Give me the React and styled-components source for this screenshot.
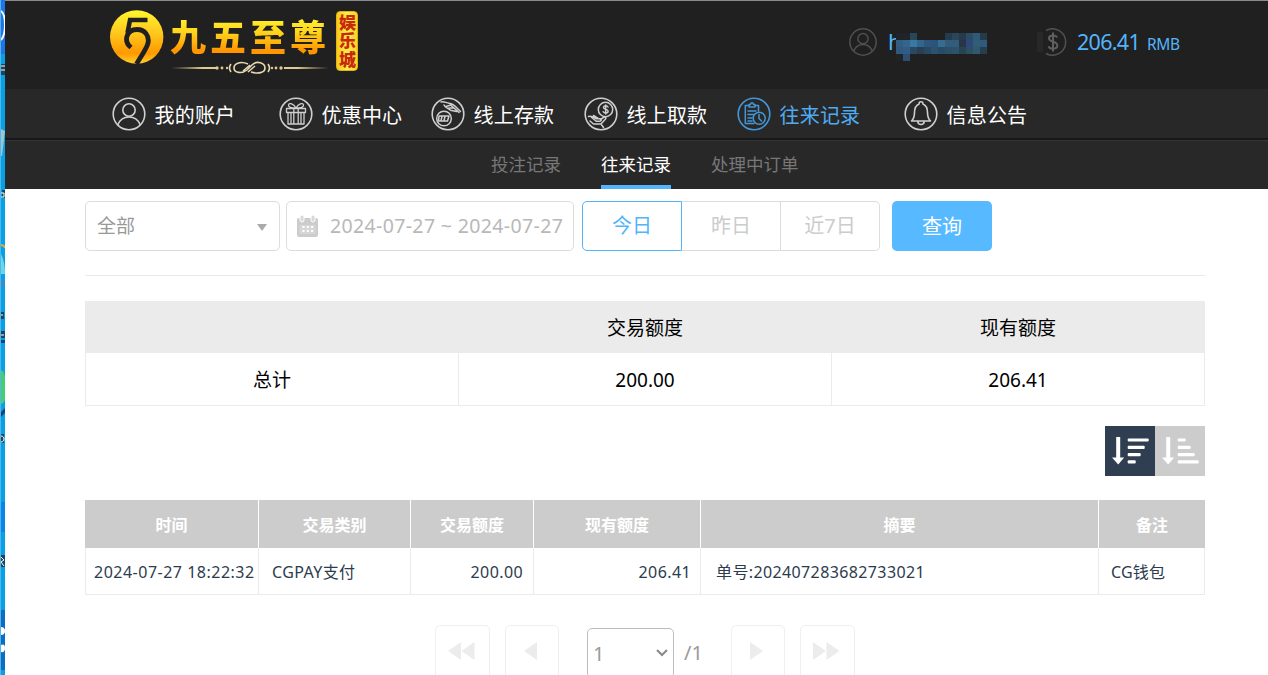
import React from "react";
import styled, { createGlobalStyle } from "styled-components";

const GlobalStyle = createGlobalStyle`
  * { box-sizing: border-box; }
  html, body { margin: 0; padding: 0; background: #fff; overflow: hidden; }
  body { font-family: "Noto Sans", "Noto Sans CJK SC", sans-serif; }
`;

const Screen = styled.div`
  display: flex;
  width: 100%;
  height: 100vh;
  overflow: hidden;
`;

const Desktop = styled.div`
  flex: 0 0 5px;
  overflow: hidden;
  border-left: 1px solid #55b4e8;
  svg { display: block; }
`;

const Page = styled.div`
  flex: 1;
  min-width: 0;
  background: #fff;
`;

const Header = styled.header`
  height: 89px;
  display: flex;
  padding-left: 104px;
  background: #202020;
  border-top: 1px solid #8a8c8b;
`;

const Logo = styled.div`
  display: flex;
  align-items: flex-start;
  width: 740px;
`;

const Emblem = styled.svg`
  margin-top: 8px;
  flex: none;
`;

const Brand = styled.div`
  margin-left: 5px;
  width: 160px;
  padding-top: 12px;
  display: flex;
  flex-direction: column;
  svg { margin: 3px 0 0 1px; }
`;

const BrandName = styled.div`
  height: 44px;
  line-height: 44px;
  font-size: 36px;
  font-weight: 900;
  font-family: "Noto Sans CJK SC", sans-serif;
  letter-spacing: 4px;
  white-space: nowrap;
  color: transparent;
  background: linear-gradient(#fff12a 14%, #ffd21c 45%, #ff9600 85%);
  background-clip: text;
  -webkit-background-clip: text;
`;

const BrandTag = styled.div`
  width: 22px;
  height: 60px;
  margin: 10px 0 0 6px;
  padding-top: 2px;
  border-radius: 4px;
  border: 1px solid #e0b512;
  background: linear-gradient(90deg, #f9c81c, #fff04a 50%, #fbd428);
  color: #c8280c;
  font-family: "Noto Sans CJK SC", sans-serif;
  font-size: 17px;
  font-weight: 900;
  line-height: 20px;
  letter-spacing: 1.5px;
  writing-mode: vertical-rl;
  white-space: nowrap;
`;

const Account = styled.div`
  display: flex;
  align-items: center;
  height: 82px;
  color: #53b4fc;
`;

const UserName = styled.div`
  display: flex;
  align-items: center;
  width: 149px;
  margin-left: 11px;
  font-size: 22px;
  span { margin-top: -2px; }
`;

const Mosaic = styled.div`
  display: grid;
  grid-template-columns: repeat(13, 7px);
  grid-auto-rows: 7px;
  margin: 9px 0 0 -6px;
`;

const Cell = styled.i`
  background: ${(p) => p.$tone};
`;

const CoinShade = styled.div`
  width: 6px;
  height: 20px;
  background: #282828;
`;

const Balance = styled.div`
  margin: -1px 0 0 10px;
  font-size: 21.5px;
  letter-spacing: -0.7px;
  white-space: nowrap;
  small { font-size: 15.5px; letter-spacing: -0.4px; margin-left: 7px; }
`;

const Nav = styled.nav`
  height: 52px;
  display: flex;
  align-items: flex-start;
  padding: 8px 0 0 107px;
  background: #282828;
  border-bottom: 1px solid #353535;
  box-shadow: inset 0 -2px 0 #171717;
`;

const NavItem = styled.a`
  display: flex;
  align-items: center;
  flex: none;
  width: ${(p) => p.$width}px;
  height: 34px;
  font-size: 20px;
  letter-spacing: 0.2px;
  white-space: nowrap;
  color: ${(p) => (p.$active ? "#4fabf2" : "#fff")};
  svg { flex: none; margin-right: 8.5px; color: ${(p) => (p.$active ? "#4596d6" : "#cfcfcf")}; }
`;

const SubNav = styled.div`
  display: flex;
  gap: 40px;
  height: 48px;
  padding-left: 486px;
  background: #282828;
`;

const SubItem = styled.a`
  height: 48px;
  line-height: 46px;
  font-size: 17.5px;
  color: ${(p) => (p.$active ? "#fff" : "#777")};
  border-bottom: ${(p) => (p.$active ? "4px solid #53b4fc" : "0")};
`;

const Content = styled.main`
  width: 1120px;
  margin-left: 80px;
  padding-top: 12px;
`;

const Filters = styled.div`
  display: flex;
  height: 75px;
  border-bottom: 1px solid #e9e9e9;
  font-size: 20px;
  line-height: 48px;
`;

const Field = styled.div`
  display: flex;
  align-items: center;
  width: ${(p) => p.$width}px;
  height: 50px;
  margin-right: ${(p) => p.$after}px;
  padding: 0 ${(p) => p.$right}px 0 ${(p) => p.$left}px;
  border: 1px solid #dcdcdc;
  border-radius: 5px;
  color: ${(p) => p.$color};
  white-space: nowrap;
  svg { flex: none; }
`;

const Kind = styled.span`
  flex: 1;
  font-size: 19px;
`;

const Caret = styled.i`
  margin-top: 3px;
  border: 5px solid transparent;
  border-top: 7px solid #aaa;
  border-bottom: 0;
`;

const DateText = styled.span`
  margin-left: 12px;
  font-size: 19.5px;
  letter-spacing: 0.36px;
`;

const Period = styled.button`
  width: ${(p) => (p.$active ? 100 : 99)}px;
  height: 50px;
  padding: 0;
  font: inherit;
  line-height: 48px;
  background: #fff;
  color: ${(p) => (p.$active ? "#53b4fc" : "#ccc")};
  border: 1px solid ${(p) => (p.$active ? "#53b4fc" : "#dcdcdc")};
  border-left-width: ${(p) => (p.$active ? 1 : 0)}px;
  border-radius: ${(p) => p.$radius || "0"};
`;

const Search = styled.button`
  width: 100px;
  height: 50px;
  margin-left: 12px;
  padding: 2px 0 0 0;
  border: 0;
  border-radius: 5px;
  background: #57b9ff;
  color: #fff;
  font: inherit;
`;

const Summary = styled.div`
  display: grid;
  grid-template-columns: 372px 373px 373px;
  margin-top: 25px;
  font-size: 19px;
  text-align: center;
  color: #000;
  border: 1px solid #ebebeb;
  border-top: 0;
`;

const SummaryHead = styled.div`
  height: 52px;
  padding-left: 1px;
  line-height: 54px;
  background: #ebebeb;
`;

const SummaryCell = styled.div`
  height: 52px;
  line-height: 54px;
  border-left: ${(p) => (p.$first ? "0" : "1px solid #ebebeb")};
`;

const SortBar = styled.div`
  display: flex;
  justify-content: flex-end;
  height: 50px;
  margin: 20px 0 24px;
`;

const SortButton = styled.div`
  width: 50px;
  height: 50px;
  background: ${(p) => (p.$active ? "#303e51" : "#ccc")};
  svg { display: block; }
`;

const Records = styled.div`
  display: grid;
  grid-template-columns: 174px 152px 123px 167px 398px 106px;
  font-size: 16px;
`;

const RecordHead = styled.div`
  height: 48px;
  line-height: 50px;
  background: #ccc;
  color: #fff;
  font-weight: 700;
  text-align: center;
  border-right: ${(p) => (p.$last ? "0" : "1px solid #fff")};
`;

const RecordCell = styled.div`
  height: 47px;
  line-height: 49px;
  padding: 0 ${(p) => p.$right || 0}px 0 ${(p) => p.$left || 0}px;
  text-align: ${(p) => (p.$right ? "right" : "left")};
  letter-spacing: ${(p) => p.$track || 0}px;
  color: #2d3b4e;
  white-space: nowrap;
  border-right: 1px solid #ebebeb;
  border-bottom: 1px solid #ebebeb;
  border-left: ${(p) => (p.$first ? "1px solid #ebebeb" : "0")};
`;

const Pager = styled.div`
  display: flex;
  align-items: flex-start;
  padding: 30px 0 0 350px;
  color: #999;
  font-size: 20px;
`;

const PageButton = styled.div`
  display: flex;
  justify-content: center;
  width: ${(p) => p.$width}px;
  height: 56px;
  padding: 16px 2px 0 0;
  margin-right: 15px;
  border: 1px solid #efefef;
  border-radius: 5px;
`;

const PageSelect = styled.div`
  display: flex;
  align-items: center;
  justify-content: space-between;
  width: 87px;
  height: 50px;
  margin: 3px 10px 0 13px;
  padding: 0 6px 0 5px;
  border: 1px solid #bdbdbd;
  border-radius: 5px;
  svg { margin-right: -1px; }
`;

const PageTotal = styled.div`
  width: 47px;
  margin-top: 3px;
  line-height: 50px;
`;

const mosaicTones = [
  "#202327", "#202327", "#28475b", "#202020", "#202020", "#202020", "#202020", "#253b4e", "#2a465a", "#273a4d", "#2b4c62", "#2f5a7a", "#263b48",
  "#335d83", "#33658d", "#3779a2", "#32668c", "#2d557d", "#2c537c", "#356d91", "#315c7c", "#315c7c", "#283449", "#304879", "#315e74", "#305880",
  "#31587d", "#305d86", "#2b4863", "#293e52", "#294960", "#2b536f", "#294b68", "#2c4f67", "#2d5269", "#284352", "#2c5061", "#2f5971", "#293e4c",
  "#202327", "#2c4f72", "#202020", "#202020", "#202020", "#202020", "#202020", "#202020", "#202020", "#202020", "#202020", "#202020", "#202020",
];

const Icon = ({ size = 34, children }) => (
  <svg width={size} height={size} viewBox="0 0 34 34" fill="none" stroke="currentColor" strokeWidth="1.6" strokeLinecap="round" strokeLinejoin="round">
    <circle cx="17" cy="17" r="15.8" />
    {children}
  </svg>
);

const person = (
  <>
    <circle cx="17" cy="13" r="6.2" />
    <path d="M6 27.5C8 22.5 12 20 17 20s9 2.500 11 7.500" />
  </>
);

const hand = (
  <path d="M4.500 19.500c3-.8 5 .3 7.500 2.200h4c1.700.2 1.700 2.200 0 2.500h-4M16.500 22.500l3.500-2.300c1.500-.6 2.500.8 1.500 1.900L17 27H9.500L6 24M9.500 18.500l5 3.200M7 20l5 4M17 27l2.500 3.500" />
);

const navItems = [
  { label: "我的账户", width: 167, art: person },
  {
    label: "优惠中心",
    width: 152,
    art: (
      <g strokeWidth="1.300">
        <path d="M7.500 11.500h19v4h-19zM9 15.500h16v11.500H9zM14.800 11.500V27M19.200 11.500V27M12 15.500V27M22 15.500V27M17 11c-2-4-7-6-7.500-2.800C9.300 10 12 11 17 11c5 0 7.700-1 7.500-2.800C24 5 19 7 17 11z" />
      </g>
    ),
  },
  {
    label: "线上存款",
    width: 153,
    art: (
      <g strokeWidth="1.500">
        <circle cx="13" cy="21.500" r="7.300" />
        <path d="M8 19h10l-1.500 5H7.500zM11 19.500l-1 4M14 19.500l-1 4M10 5c3-1.200 5 1 8 1.200 4 .3 6 2.500 8.500 5.300l3 3M13 8c1.500 3 4 3 6.500 5.200l6 1.300M18 11h5l5 4.500M20 8.500l6 5M15 9.500l5-1.500" />
      </g>
    ),
  },
  {
    label: "线上取款",
    width: 153,
    art: (
      <g strokeWidth="1.500">
        <circle cx="21.500" cy="12.500" r="7.200" />
        <path d="M24 10c-1-1.800-4.500-1.500-4.500.4 0 2.400 4.600 1.400 4.600 3.900 0 2-3.900 2.300-4.900.4M21.700 8v9" />
        {hand}
      </g>
    ),
  },
  {
    label: "往来记录",
    width: 167,
    active: true,
    art: (
      <g strokeWidth="1.500">
        <path d="M17 26.500H8.300V8.500H12M18 8.500h3.500V14M12 10h6V7.500h-1.500c0-2.500-3-2.500-3 0H12zM11 14h8M11 17.500h6M11 21h4M11 24h4" />
        <circle cx="22.200" cy="21.200" r="6" />
        <path d="M22 17.500v4l2.500 2.500" />
      </g>
    ),
  },
  {
    label: "信息公告",
    width: 123,
    art: (
      <path d="M7.500 24h19c-2-2-3-4-3-8.500 0-4.500-1.800-7.300-4.500-8.500 0-3-4-3-4 0-2.700 1.200-4.500 4-4.500 8.500 0 4.500-1 6.500-3 8.500zM13.800 24.500c.3 4 6.100 4 6.400 0" />
    ),
  },
];

const SortIcon = ({ widths }) => (
  <svg width="50" height="50" viewBox="0 0 50 50" fill="#fff">
    <path d="M11.200 11h4v20.500h4L13.200 38.500 7 31.500h4.200z" />
    {widths.map((w, i) => (
      <rect key={i} x="22.700" y={12.400 + i * 7.300} width={w} height="3.200" rx="1" />
    ))}
  </svg>
);

const Arrows = ({ count, forward }) => (
  <svg width={count * 13.500} height="18" viewBox={`0 0 ${count * 13.500} 18`} fill="#ececec">
    {Array.from({ length: count }, (_, i) => (
      <path key={i} transform={`translate(${i * 13.500} 0)`} d={forward ? "M0 0v18l13-9z" : "M13 0v18L0 9z"} />
    ))}
  </svg>
);

const DesktopEdge = () => (
  <svg width="4" height="675" viewBox="0 0 4 675">
    <rect width="4" height="675" fill="#05a0e5" />
    <rect width="4" height="54" fill="#1d76e9" />
    <path d="M0 11c3 2 4 8 4 14s-1 12-4 15" fill="none" stroke="#fff" strokeWidth="2" />
    <path d="M0 64h4v11H0zM1 190h3v8H1zM0 312h3v7H0zM0 331h4v7H0zM0 434h3v9H0zM0 555h4v12H0z" fill="#174761" />
    <path d="M0 66h4M0 70h4M0 193h3v4H0M0 315h2M0 335h3M0 436c4 0 4 6 0 6M0 557l3 3-3 2 3 4" fill="none" stroke="#fff" />
    <path d="M0 129l4 2-3 25H0z" fill="#9ac5d5" />
    <path d="M0 245q3 0 4 3" fill="none" stroke="#e3aa35" strokeWidth="2" />
    <path d="M0 254q4 8 4 20H0z" fill="#69d7eb" />
    <path d="M0 280h4q-1 8-4 9z" fill="#398ecf" />
    <path d="M0 340h4v3H0zM0 412l4-4v5l-4 4z" fill="#164480" />
    <path d="M0 370q4 2 4 9v21q-1 3-4 4z" fill="#45cf70" />
    <rect y="502" width="4" height="30" fill="#0785ee" />
    <rect y="610" width="4" height="60" fill="#0c6dc5" />
    <path d="M0 627q4 0 4 4t-4 4zM0 645q4-2 4 3t-4 4z" fill="#fff" />
  </svg>
);

export default function App() {
  return (
    <Screen>
      <GlobalStyle />
      <Desktop><DesktopEdge /></Desktop>
      <Page>
        <Header>
          <Logo>
            <Emblem width="56" height="56" viewBox="0 0 56 56">
              <defs>
                <linearGradient id="gold" x1="0" y1="0" x2="0" y2="1">
                  <stop offset="0" stopColor="#fff62d" />
                  <stop offset=".45" stopColor="#ffc51c" />
                  <stop offset=".8" stopColor="#ff9800" />
                  <stop offset="1" stopColor="#ffd02c" />
                </linearGradient>
              </defs>
              <circle cx="27.700" cy="28" r="26.700" fill="url(#gold)" />
              <path d="M38.500 11H21l-2.500 13" fill="none" stroke="#202020" strokeWidth="4.500" />
              <path d="M22 38.500C14 32 17.500 20.500 28 20.500c8 0 12.500 6.500 11 13.500-1.300 6-7 13-11.500 21" fill="none" stroke="#202020" strokeWidth="4.800" />
            </Emblem>
            <Brand>
              <BrandName>九五至尊</BrandName>
              <svg width="158" height="14" viewBox="0 0 158 14">
                <defs>
                  <linearGradient id="rule" gradientUnits="userSpaceOnUse" x1="0" y1="0" x2="158" y2="0">
                    <stop offset="0" stopColor="#c9ad6d" stopOpacity="0" />
                    <stop offset=".2" stopColor="#dfcb94" />
                    <stop offset=".8" stopColor="#dfcb94" />
                    <stop offset="1" stopColor="#c9ad6d" stopOpacity="0" />
                  </linearGradient>
                </defs>
                <path d="M0 7h45v2H0zM113 7h45v2h-45z" fill="url(#rule)" />
                <g fill="#dfcb94">
                  <circle cx="46" cy="8" r="1.700" /><circle cx="51" cy="8" r="1.400" /><circle cx="56" cy="8" r="1.200" />
                  <circle cx="101" cy="8" r="1.200" /><circle cx="105" cy="8" r="1.400" /><circle cx="110" cy="8" r="1.700" />
                </g>
                <path d="M60 4q-3 4 0 8M97 4q3 4 0 8M77 4C70 1 63 3 63 8s8 6 13 2l5-5c5-5 13-2 13 3s-7 6-14 4M72 11l7-6M77 12l7-6" fill="none" stroke="#e5d9b0" strokeWidth="1.600" />
              </svg>
            </Brand>
            <BrandTag>娱乐城</BrandTag>
          </Logo>
          <Account>
            <svg width="28" height="28" viewBox="0 0 34 34" fill="none" stroke="#505050" strokeWidth="1.800">
              <circle cx="17" cy="17" r="16" />{person}
            </svg>
            <UserName>
              <span>h</span>
              <Mosaic>{mosaicTones.map((tone, i) => <Cell key={i} $tone={tone} />)}</Mosaic>
            </UserName>
            <CoinShade />
            <svg width="24" height="28" viewBox="0 0 24 28" fill="none" stroke="#606060" strokeWidth="1.500">
              <path d="M3 2.500a13.200 13.200 0 1 1 0 23" stroke="#505050" />
              <path d="M14 9.500c-1.200-3-8-2.700-8 .8 0 4.500 8.300 2.500 8.300 7.200 0 4-7.500 4.200-8.700.8M10 4.500v19" strokeWidth="2" />
            </svg>
            <Balance>206.41<small>RMB</small></Balance>
          </Account>
        </Header>
        <Nav>
          {navItems.map((n) => (
            <NavItem key={n.label} $width={n.width} $active={n.active}>
              <Icon>{n.art}</Icon>{n.label}
            </NavItem>
          ))}
        </Nav>
        <SubNav>
          <SubItem>投注记录</SubItem>
          <SubItem $active>往来记录</SubItem>
          <SubItem>处理中订单</SubItem>
        </SubNav>
        <Content>
          <Filters>
            <Field $width={195} $after={6} $left={11} $right={12} $color="#999"><Kind>全部</Kind><Caret /></Field>
            <Field $width={288} $after={8} $left={10} $right={0} $color="#b8b8b8">
              <svg width="21" height="22" viewBox="0 0 21 22">
                <path d="M0 5q0-2 2-2h17q2 0 2 2v15q0 2-2 2H2q-2 0-2-2z" fill="#ccc" />
                <path d="M2.500 10h16v9h-16z" fill="#fff" opacity=".2" />
                <g fill="#d8d8d8" stroke="#fff"><rect x="3" y="0" width="4" height="7" rx="2" /><rect x="14" y="0" width="4" height="7" rx="2" /></g>
                <path d="M5.500 12h11M5.500 16h11" stroke="#fff" strokeWidth="2" strokeDasharray="2 2.300" />
              </svg>
              <DateText>2024-07-27 ~ 2024-07-27</DateText>
            </Field>
            <Period $active $radius="5px 0 0 5px">今日</Period>
            <Period>昨日</Period>
            <Period $radius="0 5px 5px 0">近7日</Period>
            <Search>查询</Search>
          </Filters>
          <Summary>
            <SummaryHead /><SummaryHead>交易额度</SummaryHead><SummaryHead>现有额度</SummaryHead>
            <SummaryCell $first>总计</SummaryCell><SummaryCell>200.00</SummaryCell><SummaryCell>206.41</SummaryCell>
          </Summary>
          <SortBar>
            <SortButton $active><SortIcon widths={[21, 17, 13, 8]} /></SortButton>
            <SortButton><SortIcon widths={[8, 13, 17, 21]} /></SortButton>
          </SortBar>
          <Records>
            {["时间", "交易类别", "交易额度", "现有额度", "摘要", "备注"].map((h, i) => (
              <RecordHead key={i} $last={i === 5}>{h}</RecordHead>
            ))}
            <RecordCell $first $left={8} $track={0.5}>2024-07-27 18:22:32</RecordCell>
            <RecordCell $left={13} $track={0.4}>CGPAY支付</RecordCell>
            <RecordCell $right={10} $track={0.4}>200.00</RecordCell>
            <RecordCell $right={9} $track={0.4}>206.41</RecordCell>
            <RecordCell $left={15} $track={0.38}>单号:202407283682733021</RecordCell>
            <RecordCell $left={12} $track={0.2}>CG钱包</RecordCell>
          </Records>
          <Pager>
            <PageButton $width={55}><Arrows count={2} /></PageButton>
            <PageButton $width={54}><Arrows count={1} /></PageButton>
            <PageSelect>
              1
              <svg width="12" height="8" viewBox="0 0 12 8" fill="none" stroke="#888" strokeWidth="2"><path d="M1 1l5 5 5-5" /></svg>
            </PageSelect>
            <PageTotal>/1</PageTotal>
            <PageButton $width={54}><Arrows count={1} forward /></PageButton>
            <PageButton $width={55}><Arrows count={2} forward /></PageButton>
          </Pager>
        </Content>
      </Page>
    </Screen>
  );
}
